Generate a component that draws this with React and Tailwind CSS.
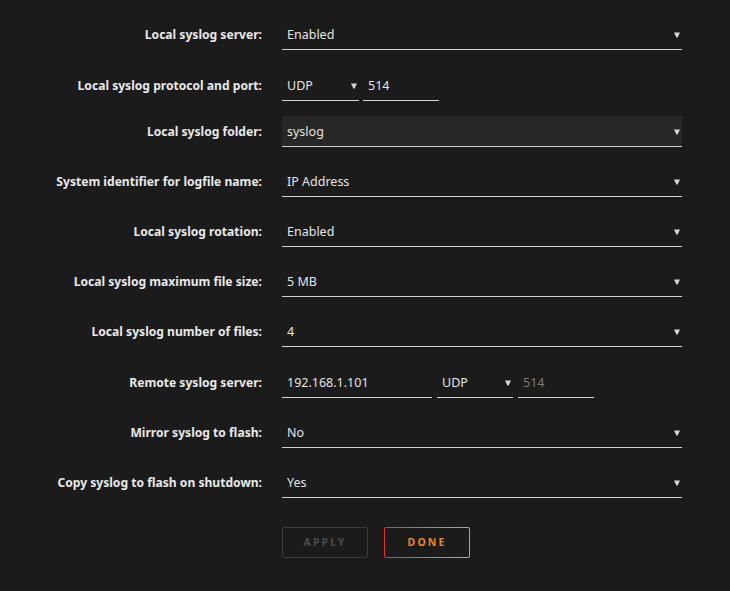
const labelFont = { fontFamily: '"Noto Sans", "Open Sans", sans-serif' };

function Arrow() {
  return (
    <svg width="6" height="6" viewBox="0 0 6 6" className="shrink-0">
      <path d="M0 0.5 H6 L3.6 5.5 H2.4 Z" fill="#d6d6d6" />
    </svg>
  );
}

function Select({ value, width = "w-[400px]", bg = "" }) {
  return (
    <div
      className={`flex h-[31px] items-center justify-between border-b border-[#d2d2d2] pl-[5px] pr-[2px] pt-[2px] ${width} ${bg}`}
    >
      <span className="text-[12.5px] text-[#e4e4e4]">{value}</span>
      <Arrow />
    </div>
  );
}

function Input({ value, width, muted }) {
  return (
    <div className={`flex h-[31px] items-center border-b border-[#d2d2d2] pl-[5px] pt-[2px] ${width}`}>
      <span className={`text-[12.5px] ${muted ? "text-[#7a7a7a]" : "text-[#e4e4e4]"}`}>{value}</span>
    </div>
  );
}

function Row({ label, mt, children }) {
  return (
    <div className={`flex items-center ${mt}`}>
      <div className="w-[262px] pt-[2px] text-right text-[12.1px] font-bold text-[#e8e8e8]" style={labelFont}>
        {label}
      </div>
      <div className="ml-[20px] flex items-center gap-[4px]">{children}</div>
    </div>
  );
}

export default function App() {
  return (
    <main
      className="h-[591px] w-[730px] overflow-hidden bg-[#1c1b1c]"
      style={{ fontFamily: '"Noto Sans", "Liberation Sans", sans-serif' }}
    >
      <div className="flex flex-col pt-[19px]">
        <Row label="Local syslog server:" mt="mt-0">
          <Select value="Enabled" />
        </Row>
        <Row label="Local syslog protocol and port:" mt="mt-[20px]">
          <Select value="UDP" width="w-[77px]" />
          <Input value="514" width="w-[76px]" />
        </Row>
        <Row label="Local syslog folder:" mt="mt-[15px]">
          <Select value="syslog" bg="bg-[#272727]" />
        </Row>
        <Row label="System identifier for logfile name:" mt="mt-[19px]">
          <Select value="IP Address" />
        </Row>
        <Row label="Local syslog rotation:" mt="mt-[19px]">
          <Select value="Enabled" />
        </Row>
        <Row label="Local syslog maximum file size:" mt="mt-[19px]">
          <Select value="5 MB" />
        </Row>
        <Row label="Local syslog number of files:" mt="mt-[19px]">
          <Select value="4" />
        </Row>
        <Row label="Remote syslog server:" mt="mt-[20px]">
          <Input value="192.168.1.101" width="w-[150px]" />
          <div className="ml-px">
            <Select value="UDP" width="w-[76px]" />
          </div>
          <div className="ml-px">
            <Input value="514" width="w-[76px]" muted />
          </div>
        </Row>
        <Row label="Mirror syslog to flash:" mt="mt-[19px]">
          <Select value="No" />
        </Row>
        <Row label="Copy syslog to flash on shutdown:" mt="mt-[19px]">
          <Select value="Yes" />
        </Row>

        <div className="mt-[29px] flex gap-[16px] pl-[282px]">
          <button
            type="button"
            className="flex h-[31px] w-[86px] items-center justify-center rounded-[2px] border border-[#3c3c3c] text-[10.5px] font-bold tracking-[0.2em] text-[#4a4a4a]"
            style={labelFont}
          >
            APPLY
          </button>
          <div className="h-[31px] w-[86px] rounded-[2px] bg-linear-to-r from-[#e42d2a] to-[#f7942a] p-px">
            <button
              type="button"
              className="flex h-full w-full items-center justify-center rounded-[1px] bg-[#1c1b1c] text-[10.5px] font-bold tracking-[0.2em] text-[#f0842a]"
              style={labelFont}
            >
              DONE
            </button>
          </div>
        </div>
      </div>
    </main>
  );
}
